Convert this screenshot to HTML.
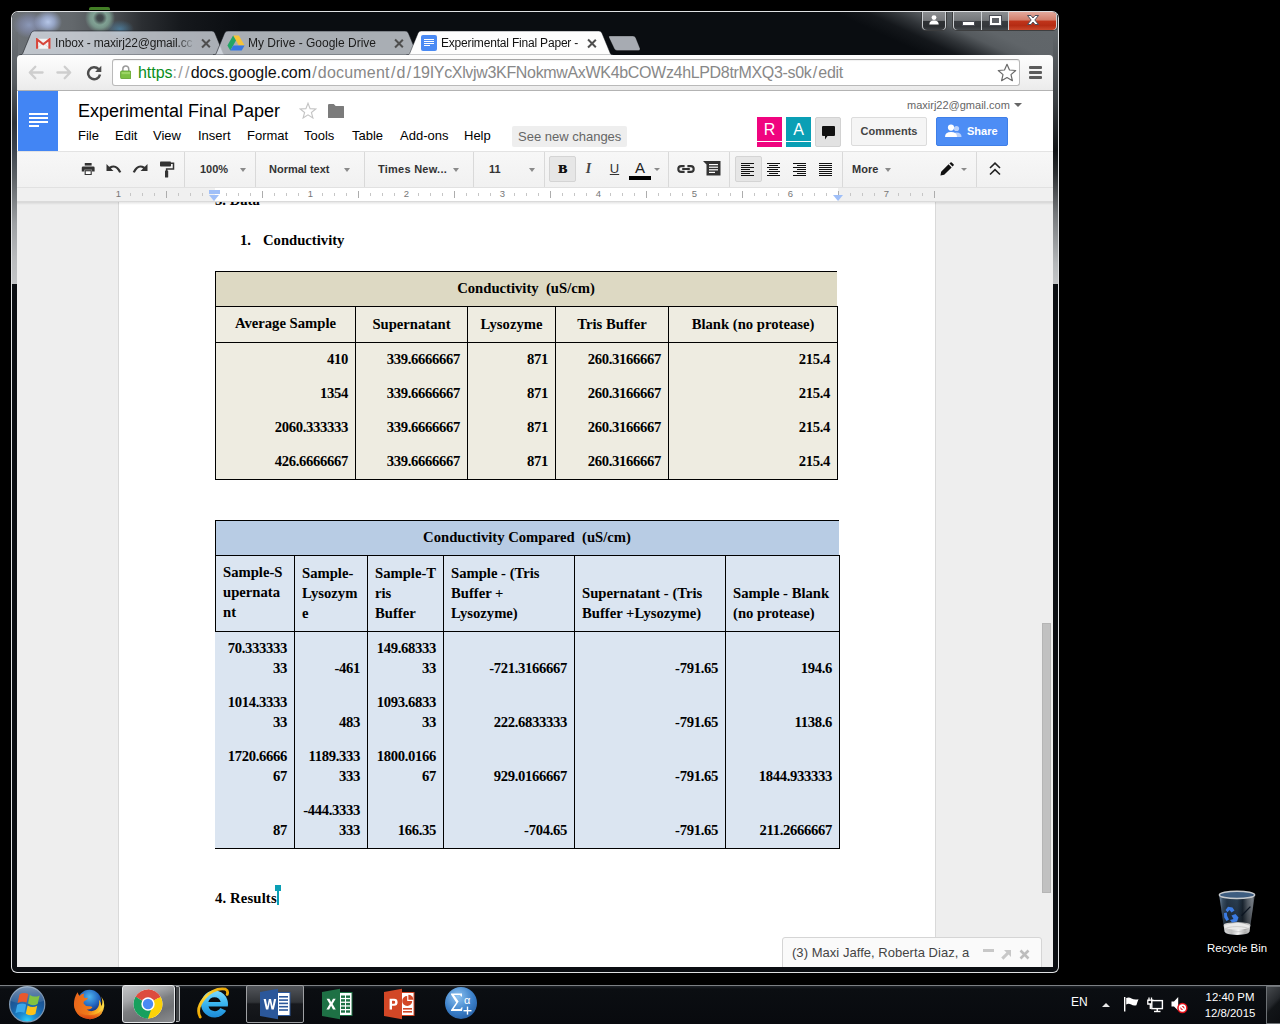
<!DOCTYPE html>
<html>
<head>
<meta charset="utf-8">
<title>Experimental Final Paper - Google Docs</title>
<style>
*{box-sizing:border-box;margin:0;padding:0}
html,body{width:1280px;height:1024px;overflow:hidden;background:#000;font-family:"Liberation Sans",sans-serif}
.abs{position:absolute}
#desk{position:absolute;left:0;top:0;width:1280px;height:1024px;background:#000;overflow:hidden}
/* ---------- window frame ---------- */
#win{position:absolute;left:11px;top:11px;width:1048px;height:962px;border-radius:7px 7px 6px 6px;background:#dfe1e3;overflow:hidden}
#winin{position:absolute;left:1px;top:1px;right:1px;bottom:1px;border-radius:6px 6px 5px 5px;overflow:hidden;background:#0a0d11}
#titlebg{position:absolute;left:0;top:0;width:1046px;height:48px;
 background:
  radial-gradient(ellipse 14px 12px at 36px 10px, rgba(190,208,245,.9) 0%, rgba(170,188,232,.7) 45%, rgba(140,155,200,0) 100%),
  radial-gradient(ellipse 16px 13px at 17px 13px, rgba(150,165,205,.75) 0%, rgba(140,150,195,.45) 55%, rgba(120,135,170,0) 100%),
  radial-gradient(circle at 88px 6px, rgba(50,58,60,.65) 0px, rgba(60,70,72,.6) 3px, rgba(140,180,162,.8) 7px, rgba(135,176,158,.7) 10px, rgba(90,110,110,0) 15px),
  radial-gradient(ellipse 14px 9px at 108px 17px, rgba(80,150,195,.6) 0%, rgba(80,150,195,0) 100%),
  linear-gradient(90deg,#6d7277 0px,#63686c 60px,#4b4f53 100px,#2b2e32 130px,#15181c 170px,#0a0d11 230px,#0a0d11 1046px);}
#refl{position:absolute;left:828px;top:0;width:218px;height:48px;background:linear-gradient(25deg,rgba(93,98,102,0) 30%,rgba(93,98,102,.12) 40%,rgba(93,98,102,.45) 48%,rgba(93,98,102,.9) 57%,rgba(96,101,105,1) 66%,rgba(98,103,107,1) 100%)}
#frameL{position:absolute;left:0;top:20px;width:6px;height:252px;background:linear-gradient(180deg,#6c7176 0%,#54595e 20%,#2f3337 36%,#3a424c 46%,#5d6266 58%,#9da0a3 76%,#b9bbbd 90%,#c3c5c7 100%)}
#frameR{position:absolute;left:1041px;top:20px;width:5px;height:252px;background:linear-gradient(180deg,#62676b 0%,#3a3e42 28%,#101316 47%,#2b2e31 56%,#74777a 72%,#b4b7b9 92%,#c3c5c7 100%)}
.tt{top:23px;font-size:12px;line-height:16px;color:#1c1c1c;white-space:nowrap;overflow:hidden;-webkit-mask-image:linear-gradient(90deg,#000 0,#000 calc(100% - 16px),rgba(0,0,0,.1) 100%);mask-image:linear-gradient(90deg,#000 0,#000 calc(100% - 16px),rgba(0,0,0,.1) 100%)}
.tx{top:27px;width:9px;height:9px}
.tx:before,.tx:after{content:"";position:absolute;left:3.7px;top:-1px;width:1.6px;height:11px;background:#4f4f4f;transform:rotate(45deg)}
.tx:after{transform:rotate(-45deg)}
/* ---------- chrome toolbar ---------- */
#tool{position:absolute;left:17px;top:55px;width:1036px;height:36px;background:linear-gradient(180deg,#fdfdfd 0%,#f3f3f3 60%,#ebebeb 100%);border-radius:4px 4px 0 0;border-bottom:1px solid #b3b3b3}
#omni{position:absolute;left:95px;top:4px;width:908px;height:27px;background:#fff;border:1px solid #b9b9b9;border-top-color:#a6a6a6;border-radius:3px;box-shadow:inset 0 1px 1px rgba(0,0,0,.06)}
#url i{font-style:normal;display:inline-block;width:6.9px;text-align:center;letter-spacing:0}
#url{position:absolute;left:25px;top:2px;font-size:16px;line-height:21px;white-space:nowrap;color:#888;letter-spacing:-0.03px}
/* ---------- page content ---------- */
#content{position:absolute;left:17px;top:91px;width:1036px;height:876px;background:#eee;overflow:hidden}
#c0{position:absolute;left:-17px;top:-91px;width:1280px;height:1024px}
#c0 div,#c0 span,#c0 svg{position:absolute}
.m{font-size:13px;line-height:16px;color:#000;top:128px;white-space:nowrap}
.sep{top:152px;width:1px;height:35px;background:#d9d9d9}
.tb{font-weight:bold;font-size:11px;line-height:14px;color:#333;top:162px;white-space:nowrap}
.dd{top:168px;width:0;height:0;border-left:3.5px solid transparent;border-right:3.5px solid transparent;border-top:4px solid #8a8a8a}
.rn{font-size:9.5px;line-height:12px;color:#777;top:188px;width:12px;text-align:center}
.t{font-family:"Liberation Serif",serif;font-weight:bold;font-size:14.67px;line-height:20px;color:#000;white-space:nowrap}
.n{letter-spacing:-0.33px}
.r{text-align:right}
.c{text-align:center}
.ln{background:#000}
/* ---------- taskbar ---------- */
#task{position:absolute;left:0;top:985px;width:1280px;height:39px;background:linear-gradient(180deg,#7c8084 0px,#7c8084 1px,#1b1f24 1.5px,#0b0e12 4px,#080a0e 39px)}
</style>
</head>
<body>
<div id="desk">
  <div class="abs" style="left:89px;top:7px;width:21px;height:3px;background:#437f26;border-radius:2px 2px 0 0"></div>

  <!-- WINDOW -->
  <div id="win"><div id="winin">
    <div id="titlebg"></div>
    <div id="refl"></div>
    <div id="frameL"></div>
    <div id="frameR"></div>
    <svg class="abs" style="left:0;top:0" width="1046" height="50" viewBox="12 12 1046 50">
<path d="M609.5,36 L633,36 Q635,36 635.8,38 L640,48.5 Q640.6,50.5 638.5,50.5 L617,50.5 Q615,50.5 614.2,48.5 L609,37.5 Q608.5,36 609.5,36 Z" fill="rgba(206,211,219,.80)" stroke="rgba(0,0,0,.35)" stroke-width="0.8"/>
<path d="M19.5,55 C22.0,55 22.7,54 23.3,52 L30.3,35 C31.3,32.5 32.0,31 34.5,31 L211.5,31 C214.0,31 214.7,32.5 215.7,35 L222.7,52 C223.3,54 224.0,55 226.5,55 Z" fill="rgba(217,222,230,.77)" stroke="rgba(20,24,30,.55)" stroke-width="1"/>
<path d="M213,55 C215.5,55 216.2,54 216.8,52 L223.8,35 C224.8,32.5 225.5,31 228,31 L405,31 C407.5,31 408.2,32.5 409.2,35 L416.2,52 C416.8,54 417.5,55 420,55 Z" fill="rgba(217,222,230,.77)" stroke="rgba(20,24,30,.55)" stroke-width="1"/>
<path d="M406.5,55 C409.0,55 409.7,54 410.3,52 L417.3,35 C418.3,32.5 419.0,31 421.5,31 L598.5,31 C601.0,31 601.7,32.5 602.7,35 L609.7,52 C610.3,54 611.0,55 613.5,55 Z" fill="#fdfdfd" stroke="rgba(20,24,30,.45)" stroke-width="1"/>
</svg>
<!-- gmail icon -->
<svg class="abs" style="left:24px;top:26px" width="14.5" height="11.5" viewBox="0 0 16 12"><rect x="1" y="0.5" width="14" height="11" fill="#f3f3f3"/><path d="M1 11 L8 5 L15 11" fill="none" stroke="#d8d8d8" stroke-width="1"/><path d="M1.2 11.5 V1.2 L8 6.6 L14.8 1.2 V11.5" fill="none" stroke="#d8453a" stroke-width="2.3" stroke-linejoin="miter"/></svg>
<div class="abs tt" style="left:43px;width:138px;letter-spacing:-0.17px">Inbox - maxirj22@gmail.cc</div>
<div class="abs tx" style="left:189px"></div>
<!-- drive icon -->
<svg class="abs" style="left:215px;top:23px" width="18" height="16" viewBox="0 0 18 16"><path d="M6.1 0.5 H11.9 L17.6 10.4 H11.8 Z" fill="#f6c338"/><path d="M6.1 0.5 L9 5.5 L3.3 15.4 L0.4 10.4 Z" fill="#23a566"/><path d="M6.2 10.4 H17.6 L14.7 15.4 H3.3 Z" fill="#3777e3"/></svg>
<div class="abs tt" style="left:236px;width:150px">My Drive - Google Drive</div>
<div class="abs tx" style="left:382px"></div>
<!-- docs icon -->
<div class="abs" style="left:409px;top:23px;width:16px;height:16px;background:#4a8af4;border-radius:2px"></div>
<div class="abs" style="left:412px;top:27px;width:10px;height:1px;background:#fff"></div>
<div class="abs" style="left:412px;top:29px;width:10px;height:1px;background:#fff"></div>
<div class="abs" style="left:412px;top:31px;width:10px;height:1px;background:#fff"></div>
<div class="abs" style="left:412px;top:33px;width:6px;height:1px;background:#fff"></div>
<div class="abs tt" style="left:429px;width:153px;color:#111;letter-spacing:-0.19px">Experimental Final Paper -</div>
<div class="abs tx" style="left:575px"></div>

    <!-- window buttons (coords relative to winin origin 12,12) -->
<div class="abs" style="left:909px;top:-2px;width:26px;height:21px;border:1px solid rgba(0,0,0,.7);border-radius:0 0 5px 5px;background:rgba(225,228,231,.85)"></div>
<div class="abs" style="left:911px;top:0;width:22px;height:18px;border-radius:0 0 4px 4px;background:linear-gradient(180deg,#8b8e91 0%,#77797c 47%,#2f3235 50%,#2b2e31 80%,#3b3e42 100%)"></div>
<svg class="abs" style="left:917px;top:3px" width="10" height="10" viewBox="0 0 10 10"><circle cx="5" cy="2.6" r="2.4" fill="#fff"/><path d="M0.3 9.6 Q0.3 5.6 5 5.6 Q9.7 5.6 9.7 9.6 Z" fill="#fff"/></svg>
<div class="abs" style="left:940px;top:-2px;width:106px;height:21px;border:1px solid rgba(0,0,0,.7);border-radius:0 0 5px 5px;background:rgba(225,228,231,.85)"></div>
<div class="abs" style="left:942px;top:0;width:27px;height:18px;border-radius:0 0 0 4px;background:linear-gradient(180deg,#8b8e91 0%,#74777a 47%,#3a3d41 50%,#34373b 80%,#45494d 100%)"></div>
<div class="abs" style="left:970px;top:0;width:26px;height:18px;background:linear-gradient(180deg,#8b8e91 0%,#74777a 47%,#3a3d41 50%,#34373b 80%,#45494d 100%)"></div>
<div class="abs" style="left:997px;top:0;width:47px;height:18px;border-radius:0 0 4px 0;background:linear-gradient(180deg,#e3a99c 0%,#d27f6c 45%,#c0341b 50%,#b52c14 75%,#c9482c 100%)"></div>
<div class="abs" style="left:951px;top:10px;width:11px;height:3px;background:#fff;border:1px solid #4a4d55;box-sizing:content-box;margin:-1px"></div>
<div class="abs" style="left:978px;top:4px;width:11px;height:9px;border:2px solid #fff;outline:1px solid #4a4d55;background:#5e6166"></div>
<svg class="abs" style="left:1014px;top:2px" width="14" height="12" viewBox="0 0 14 12"><path d="M1.5 1.5 H5 L7 4 L9 1.5 H12.5 L8.8 6 L12.5 10.5 H9 L7 8 L5 10.5 H1.5 L5.2 6 Z" fill="#fff" stroke="#4b4f5c" stroke-width="1"/></svg>

  </div></div>

  <div id="tool">
    <!-- nav buttons (coords relative to #tool origin 17,55) -->
<svg class="abs" style="left:10.7px;top:10px" width="16" height="15" viewBox="0 0 16 15"><path d="M7.3 1.8 L1.8 7.5 L7.3 13.2 M2.200 7.500 H14.6" fill="none" stroke="#cecece" stroke-width="2.3" stroke-linecap="round" stroke-linejoin="round"/></svg>
<svg class="abs" style="left:39.2px;top:10px" width="16" height="15" viewBox="0 0 16 15"><path d="M8.7 1.8 L14.2 7.5 L8.7 13.2 M13.8 7.500 H1.4" fill="none" stroke="#cecece" stroke-width="2.3" stroke-linecap="round" stroke-linejoin="round"/></svg>
<svg class="abs" style="left:68.5px;top:9.5px" width="16" height="16" viewBox="0 0 16 16"><path d="M12.6 4.2 A6 6 0 1 0 14 9.5" fill="none" stroke="#4d4d4d" stroke-width="2.5"/><path d="M15.3 0.8 V7 H9.1 Z" fill="#4d4d4d"/></svg>
<!-- hamburger -->
<div class="abs" style="left:1012px;top:11px;width:13px;height:3px;background:#5c5c5c;border-radius:1px"></div>
<div class="abs" style="left:1012px;top:16px;width:13px;height:3px;background:#5c5c5c;border-radius:1px"></div>
<div class="abs" style="left:1012px;top:21px;width:13px;height:3px;background:#5c5c5c;border-radius:1px"></div>

    <div id="omni">
      <svg class="abs" style="left:6.6px;top:5px" width="11.6" height="14.4" viewBox="0 0 13 16"><path d="M3.2 7 V4.4 A3.3 3.3 0 0 1 9.8 4.4 V7" fill="none" stroke="#9a9a9a" stroke-width="1.7"/><rect x="0.7" y="6.7" width="11.6" height="8.6" rx="1.2" fill="#7cc043" stroke="#5e9e2e" stroke-width="1"/><rect x="1.7" y="7.6" width="9.6" height="2.6" fill="#a2d86e" opacity=".8"/></svg>
<svg class="abs" style="left:884px;top:3px" width="20" height="19" viewBox="0 0 20 19"><path d="M10 1.3 L12.5 7 L18.7 7.5 L14 11.6 L15.4 17.7 L10 14.5 L4.6 17.7 L6 11.6 L1.3 7.5 L7.5 7 Z" fill="#fff" stroke="#6a6a6a" stroke-width="1.2" stroke-linejoin="round"/></svg>

      <div id="url"><span style="color:#0b8e1c">https</span><span style="color:#999">:<i>/</i><i>/</i></span><span style="color:#111;letter-spacing:-0.05px">docs.google.com</span><span style="letter-spacing:.19px"><i>/</i>document<i>/</i>d<i>/</i></span><span style="letter-spacing:-0.33px">19IYcXlvjw3KFNokmwAxWK4bCOWz4hLPD8trMXQ3-s0k<i>/</i>edit</span></div>
    </div>
  </div>

  <div id="content">
    <div id="c0">
<!-- docs header -->
<div style="left:17px;top:91px;width:1036px;height:60px;background:#fff"></div>
<div style="left:17px;top:151px;width:1036px;height:1px;background:#e3e3e3"></div>
<div style="left:18px;top:91px;width:40px;height:60px;background:#4285f4"></div>
<div style="left:29px;top:113px;width:19px;height:2px;background:#fff"></div>
<div style="left:29px;top:117px;width:19px;height:2px;background:#fff"></div>
<div style="left:29px;top:121px;width:19px;height:2px;background:#fff"></div>
<div style="left:29px;top:125px;width:10px;height:2px;background:#fff"></div>
<div style="left:78px;top:100px;font-size:18px;line-height:22px;color:#000;white-space:nowrap">Experimental Final Paper</div>
<svg style="left:299px;top:102px" width="18" height="17" viewBox="0 0 18 17"><path d="M9 1.2 L11.1 6.6 L16.8 6.9 L12.4 10.5 L13.9 16 L9 12.9 L4.1 16 L5.6 10.5 L1.2 6.9 L6.9 6.6 Z" fill="none" stroke="#c4c4c4" stroke-width="1.1"/></svg>
<svg style="left:328px;top:103.5px" width="16.3" height="14.4" viewBox="0 0 17 15"><path d="M0 1.2 Q0 0 1.2 0 L6 0 L8 2 L15.8 2 Q17 2 17 3.2 L17 13.8 Q17 15 15.8 15 L1.2 15 Q0 15 0 13.8 Z" fill="#7b7b7b"/></svg>
<div class="m" style="left:78px">File</div>
<div class="m" style="left:115px">Edit</div>
<div class="m" style="left:153px">View</div>
<div class="m" style="left:198px">Insert</div>
<div class="m" style="left:247px">Format</div>
<div class="m" style="left:304px">Tools</div>
<div class="m" style="left:352px">Table</div>
<div class="m" style="left:400px">Add-ons</div>
<div class="m" style="left:464px">Help</div>
<div style="left:512px;top:126px;width:115px;height:21px;background:#eee;border-radius:2px"></div>
<div class="m" style="left:518px;top:129px;color:#666">See new changes</div>
<!-- right side of header -->
<div style="left:907px;top:98px;font-size:11px;line-height:14px;color:#666;white-space:nowrap">maxirj22@gmail.com</div>
<div style="left:1014px;top:103px;width:0;height:0;border-left:4px solid transparent;border-right:4px solid transparent;border-top:4px solid #666"></div>
<div style="left:757px;top:117px;width:25px;height:30px;background:#f0047f"></div>
<div style="left:757px;top:141px;width:25px;height:1px;background:#fff"></div>
<div style="left:757px;top:121px;width:25px;font-size:16px;line-height:18px;color:#fff;text-align:center">R</div>
<div style="left:786px;top:117px;width:25px;height:30px;background:#0a9fb5"></div>
<div style="left:786px;top:141px;width:25px;height:1px;background:#fff"></div>
<div style="left:786px;top:121px;width:25px;font-size:16px;line-height:18px;color:#fff;text-align:center">A</div>
<div style="left:815px;top:117px;width:26px;height:30px;background:#e2e2e2;border:1px solid #d2d2d2;border-radius:2px"></div>
<svg style="left:822px;top:126px" width="13" height="14" viewBox="0 0 13 14"><path d="M1 0 H12 Q13 0 13 1 V9 Q13 10 12 10 H5.5 L3 13.5 V10 H1 Q0 10 0 9 V1 Q0 0 1 0 Z" fill="#111"/></svg>
<div style="left:851px;top:117px;width:76px;height:29px;background:#f5f5f5;border:1px solid #dcdcdc;border-radius:2px"></div>
<div style="left:851px;top:124px;width:76px;text-align:center;font-weight:bold;font-size:11px;line-height:14px;color:#444">Comments</div>
<div style="left:936px;top:117px;width:72px;height:29px;background:#4d8df5;border:1px solid #3f7fe8;border-radius:2px"></div>
<svg style="left:945px;top:124px" width="17" height="14" viewBox="0 0 17 14"><circle cx="11.5" cy="4.5" r="2.6" fill="#b9d1fb"/><path d="M7.5 13 Q7.5 8.5 11.5 8.5 Q16.5 8.5 16.5 13 Z" fill="#b9d1fb"/><circle cx="6" cy="3.6" r="3.1" fill="#fff"/><path d="M0 13 Q0 8 6 8 Q12 8 12 13 Z" fill="#fff"/></svg>
<div style="left:967px;top:124px;font-weight:bold;font-size:11px;line-height:14px;color:#fff">Share</div>

<!--PAGE-->
<!-- page -->
<div style="left:118px;top:180px;width:818px;height:800px;background:#fff;border:1px solid #d9d9d9"></div>
<div class="t" style="left:215px;top:190px;">3. Data</div>
<div class="t" style="left:240px;top:230px;">1.</div>
<div class="t" style="left:263px;top:230px;">Conductivity</div>
<div style="left:215px;top:271px;width:622px;height:35px;background:#ddd9c3"></div>
<div style="left:215px;top:306px;width:623px;height:173px;background:#eeece1"></div>
<div class="ln" style="left:215px;top:271px;width:622px;height:1px"></div>
<div class="ln" style="left:215px;top:306px;width:623px;height:1px"></div>
<div class="ln" style="left:215px;top:342px;width:623px;height:1px"></div>
<div class="ln" style="left:215px;top:479px;width:623px;height:1px"></div>
<div class="ln" style="left:215px;top:271px;width:1px;height:209px"></div>
<div class="ln" style="left:355px;top:306px;width:1px;height:174px"></div>
<div class="ln" style="left:467px;top:306px;width:1px;height:174px"></div>
<div class="ln" style="left:555px;top:306px;width:1px;height:174px"></div>
<div class="ln" style="left:668px;top:306px;width:1px;height:174px"></div>
<div class="ln" style="left:837px;top:306px;width:1px;height:174px"></div>
<div class="t c" style="left:215px;top:278px;width:622px;">Conductivity&nbsp; (uS/cm)</div>
<div class="t c" style="left:215px;top:313px;width:141px;">Average Sample</div>
<div class="t c" style="left:355px;top:314px;width:113px;">Supernatant</div>
<div class="t c" style="left:467px;top:314px;width:89px;">Lysozyme</div>
<div class="t c" style="left:555px;top:314px;width:114px;">Tris Buffer</div>
<div class="t c" style="left:668px;top:314px;width:170px;">Blank (no protease)</div>
<div class="t r n" style="left:215px;top:349px;width:133px;">410</div>
<div class="t r n" style="left:215px;top:383px;width:133px;">1354</div>
<div class="t r n" style="left:215px;top:417px;width:133px;">2060.333333</div>
<div class="t r n" style="left:215px;top:451px;width:133px;">426.6666667</div>
<div class="t r n" style="left:355px;top:349px;width:105px;">339.6666667</div>
<div class="t r n" style="left:355px;top:383px;width:105px;">339.6666667</div>
<div class="t r n" style="left:355px;top:417px;width:105px;">339.6666667</div>
<div class="t r n" style="left:355px;top:451px;width:105px;">339.6666667</div>
<div class="t r n" style="left:467px;top:349px;width:81px;">871</div>
<div class="t r n" style="left:467px;top:383px;width:81px;">871</div>
<div class="t r n" style="left:467px;top:417px;width:81px;">871</div>
<div class="t r n" style="left:467px;top:451px;width:81px;">871</div>
<div class="t r n" style="left:555px;top:349px;width:106px;">260.3166667</div>
<div class="t r n" style="left:555px;top:383px;width:106px;">260.3166667</div>
<div class="t r n" style="left:555px;top:417px;width:106px;">260.3166667</div>
<div class="t r n" style="left:555px;top:451px;width:106px;">260.3166667</div>
<div class="t r n" style="left:668px;top:349px;width:162px;">215.4</div>
<div class="t r n" style="left:668px;top:383px;width:162px;">215.4</div>
<div class="t r n" style="left:668px;top:417px;width:162px;">215.4</div>
<div class="t r n" style="left:668px;top:451px;width:162px;">215.4</div>
<div style="left:215px;top:520px;width:624px;height:35px;background:#b8cce4"></div>
<div style="left:215px;top:555px;width:625px;height:293px;background:#dbe5f1"></div>
<div class="ln" style="left:215px;top:520px;width:624px;height:1px"></div>
<div class="ln" style="left:215px;top:555px;width:625px;height:1px"></div>
<div class="ln" style="left:215px;top:631px;width:625px;height:1px"></div>
<div class="ln" style="left:215px;top:848px;width:625px;height:1px"></div>
<div class="ln" style="left:215px;top:520px;width:1px;height:112px"></div>
<div class="ln" style="left:294px;top:555px;width:1px;height:294px"></div>
<div class="ln" style="left:367px;top:555px;width:1px;height:294px"></div>
<div class="ln" style="left:443px;top:555px;width:1px;height:294px"></div>
<div class="ln" style="left:574px;top:555px;width:1px;height:294px"></div>
<div class="ln" style="left:725px;top:555px;width:1px;height:294px"></div>
<div class="ln" style="left:839px;top:555px;width:1px;height:294px"></div>
<div class="t c" style="left:215px;top:527px;width:624px;">Conductivity Compared&nbsp; (uS/cm)</div>
<div class="t" style="left:223px;top:562px;">Sample-S</div>
<div class="t" style="left:223px;top:582px;">upernata</div>
<div class="t" style="left:223px;top:602px;">nt</div>
<div class="t" style="left:302px;top:563px;">Sample-</div>
<div class="t" style="left:302px;top:583px;">Lysozym</div>
<div class="t" style="left:302px;top:603px;">e</div>
<div class="t" style="left:375px;top:563px;">Sample-T</div>
<div class="t" style="left:375px;top:583px;">ris</div>
<div class="t" style="left:375px;top:603px;">Buffer</div>
<div class="t" style="left:451px;top:563px;">Sample - (Tris</div>
<div class="t" style="left:451px;top:583px;">Buffer +</div>
<div class="t" style="left:451px;top:603px;">Lysozyme)</div>
<div class="t" style="left:582px;top:583px;">Supernatant - (Tris</div>
<div class="t" style="left:582px;top:603px;">Buffer +Lysozyme)</div>
<div class="t" style="left:733px;top:583px;">Sample - Blank</div>
<div class="t" style="left:733px;top:603px;">(no protease)</div>
<div class="t r n" style="left:215px;top:638px;width:72px;">70.333333</div>
<div class="t r n" style="left:215px;top:658px;width:72px;">33</div>
<div class="t r n" style="left:215px;top:692px;width:72px;">1014.3333</div>
<div class="t r n" style="left:215px;top:712px;width:72px;">33</div>
<div class="t r n" style="left:215px;top:746px;width:72px;">1720.6666</div>
<div class="t r n" style="left:215px;top:766px;width:72px;">67</div>
<div class="t r n" style="left:215px;top:820px;width:72px;">87</div>
<div class="t r n" style="left:294px;top:658px;width:66px;">-461</div>
<div class="t r n" style="left:294px;top:712px;width:66px;">483</div>
<div class="t r n" style="left:294px;top:746px;width:66px;">1189.333</div>
<div class="t r n" style="left:294px;top:766px;width:66px;">333</div>
<div class="t r n" style="left:294px;top:800px;width:66px;">-444.3333</div>
<div class="t r n" style="left:294px;top:820px;width:66px;">333</div>
<div class="t r n" style="left:367px;top:638px;width:69px;">149.68333</div>
<div class="t r n" style="left:367px;top:658px;width:69px;">33</div>
<div class="t r n" style="left:367px;top:692px;width:69px;">1093.6833</div>
<div class="t r n" style="left:367px;top:712px;width:69px;">33</div>
<div class="t r n" style="left:367px;top:746px;width:69px;">1800.0166</div>
<div class="t r n" style="left:367px;top:766px;width:69px;">67</div>
<div class="t r n" style="left:367px;top:820px;width:69px;">166.35</div>
<div class="t r n" style="left:443px;top:658px;width:124px;">-721.3166667</div>
<div class="t r n" style="left:443px;top:712px;width:124px;">222.6833333</div>
<div class="t r n" style="left:443px;top:766px;width:124px;">929.0166667</div>
<div class="t r n" style="left:443px;top:820px;width:124px;">-704.65</div>
<div class="t r n" style="left:574px;top:658px;width:144px;">-791.65</div>
<div class="t r n" style="left:574px;top:712px;width:144px;">-791.65</div>
<div class="t r n" style="left:574px;top:766px;width:144px;">-791.65</div>
<div class="t r n" style="left:574px;top:820px;width:144px;">-791.65</div>
<div class="t r n" style="left:725px;top:658px;width:107px;">194.6</div>
<div class="t r n" style="left:725px;top:712px;width:107px;">1138.6</div>
<div class="t r n" style="left:725px;top:766px;width:107px;">1844.933333</div>
<div class="t r n" style="left:725px;top:820px;width:107px;">211.2666667</div>
<div class="t" style="left:215px;top:888px;letter-spacing:.15px;">4. Results</div>
<div style="left:277px;top:889px;width:2px;height:16px;background:#0a9fb5"></div>
<div style="left:275px;top:885px;width:6px;height:6px;background:#0a9fb5"></div>
<!--/PAGE-->
<!-- docs toolbar -->
<div style="left:17px;top:152px;width:1036px;height:35px;background:linear-gradient(180deg,#f7f7f7,#f1f1f1)"></div>
<div style="left:17px;top:187px;width:1036px;height:1px;background:#e1e1e1"></div>
<div class="sep" style="left:184px"></div><div class="sep" style="left:255px"></div><div class="sep" style="left:364px"></div><div class="sep" style="left:473px"></div><div class="sep" style="left:544px"></div><div class="sep" style="left:668px"></div><div class="sep" style="left:729px"></div><div class="sep" style="left:842px"></div><div class="sep" style="left:976px"></div>
<!-- print -->
<svg style="left:80.6px;top:163px" width="14.4" height="12" viewBox="0 0 15 14"><rect x="3.5" y="0" width="8" height="3" fill="#333"/><path d="M1.5 4 H13.5 Q15 4 15 5.5 V10 H12 V8 H3 V10 H0 V5.5 Q0 4 1.5 4 Z" fill="#333"/><rect x="4" y="9" width="7" height="4.5" fill="#fff" stroke="#333" stroke-width="1.3"/></svg>
<!-- undo -->
<svg style="left:106px;top:163px" width="16" height="12" viewBox="0 0 16 12"><path d="M0.5 1 L0.5 8 L7.5 8 L4.9 5.4 Q9.5 2.6 13.2 9.8 L15.3 9 Q11 -0.5 3.2 3.7 Z" fill="#333"/></svg>
<!-- redo -->
<svg style="left:132px;top:163px" width="16" height="12" viewBox="0 0 16 12"><path d="M15.5 1 L15.5 8 L8.5 8 L11.1 5.4 Q6.5 2.6 2.8 9.8 L0.7 9 Q5 -0.5 12.8 3.7 Z" fill="#333"/></svg>
<!-- paint format -->
<svg style="left:159px;top:161px" width="16" height="17" viewBox="0 0 16 17"><rect x="1" y="0.5" width="11" height="5" rx="0.8" fill="#333"/><path d="M12 2.2 H14.5 V8 H7.6 V10" fill="none" stroke="#333" stroke-width="1.5"/><rect x="6" y="9.5" width="3.2" height="7" rx="0.6" fill="#333"/></svg>
<div class="tb" style="left:200px">100%</div><div class="dd" style="left:240px"></div>
<div class="tb" style="left:269px">Normal text</div><div class="dd" style="left:344px"></div>
<div class="tb" style="left:378px;letter-spacing:.25px">Times New...</div><div class="dd" style="left:453px"></div>
<div class="tb" style="left:489px">11</div><div class="dd" style="left:529px"></div>
<!-- B I U A -->
<div style="left:549px;top:156px;width:27px;height:26px;background:#e6e6e6;border:1px solid #d4d4d4;border-radius:2px"></div>
<div style="left:549px;top:161px;width:27px;text-align:center;font-family:'Liberation Serif',serif;font-weight:bold;font-size:13.5px;line-height:16px;color:#111;text-shadow:.4px 0 0 #111">B</div>
<div style="left:575px;top:161px;width:27px;text-align:center;font-family:'Liberation Serif',serif;font-style:italic;font-weight:bold;font-size:14px;line-height:16px;color:#444">I</div>
<div style="left:601px;top:161px;width:27px;text-align:center;font-size:13px;line-height:16px;color:#333;text-decoration:underline">U</div>
<div style="left:628px;top:159px;width:24px;text-align:center;font-size:15px;line-height:17px;color:#222">A</div>
<div style="left:629px;top:176.4px;width:22px;height:3.4px;background:#000"></div>
<div class="dd" style="left:654px;border-left-width:3px;border-right-width:3px;border-top-width:3.5px"></div>
<!-- link -->
<svg style="left:677px;top:164.5px" width="18" height="8" viewBox="0 0 18 8"><path d="M7.6 1.1 H4.2 A2.9 2.9 0 0 0 4.2 6.900 H7.6 M10.4 1.1 H13.8 A2.9 2.9 0 0 1 13.8 6.900 H10.4" fill="none" stroke="#333" stroke-width="2.1"/><rect x="5.2" y="3" width="7.6" height="2" fill="#333"/></svg>
<!-- comment -->
<svg style="left:703px;top:161px" width="18" height="15" viewBox="0 0 18 15"><path d="M0 0 H17.5 V14.5 H3.5 V3.5 Z" fill="#333"/><rect x="6" y="3" width="9" height="1.2" fill="#fff"/><rect x="6" y="5.6" width="9" height="1.2" fill="#fff"/><rect x="6" y="8.2" width="9" height="1.2" fill="#fff"/><rect x="6" y="10.8" width="6" height="1.2" fill="#fff"/></svg>
<!-- align -->
<div style="left:735px;top:156px;width:27px;height:26px;background:#e6e6e6;border:1px solid #d4d4d4;border-radius:2px"></div>
<div style="left:741px;top:163px;width:13px;height:1px;background:#111"></div>
<div style="left:741px;top:165px;width:9px;height:1px;background:#111"></div>
<div style="left:741px;top:167px;width:13px;height:1px;background:#111"></div>
<div style="left:741px;top:169px;width:9px;height:1px;background:#111"></div>
<div style="left:741px;top:171px;width:13px;height:1px;background:#111"></div>
<div style="left:741px;top:173px;width:9px;height:1px;background:#111"></div>
<div style="left:741px;top:175px;width:13px;height:1px;background:#111"></div><div style="left:767.0px;top:163px;width:13px;height:1px;background:#111"></div>
<div style="left:769.0px;top:165px;width:9px;height:1px;background:#111"></div>
<div style="left:767.0px;top:167px;width:13px;height:1px;background:#111"></div>
<div style="left:769.0px;top:169px;width:9px;height:1px;background:#111"></div>
<div style="left:767.0px;top:171px;width:13px;height:1px;background:#111"></div>
<div style="left:769.0px;top:173px;width:9px;height:1px;background:#111"></div>
<div style="left:767.0px;top:175px;width:13px;height:1px;background:#111"></div><div style="left:793px;top:163px;width:13px;height:1px;background:#111"></div>
<div style="left:797px;top:165px;width:9px;height:1px;background:#111"></div>
<div style="left:793px;top:167px;width:13px;height:1px;background:#111"></div>
<div style="left:797px;top:169px;width:9px;height:1px;background:#111"></div>
<div style="left:793px;top:171px;width:13px;height:1px;background:#111"></div>
<div style="left:797px;top:173px;width:9px;height:1px;background:#111"></div>
<div style="left:793px;top:175px;width:13px;height:1px;background:#111"></div><div style="left:819px;top:163px;width:13px;height:1px;background:#111"></div>
<div style="left:819px;top:165px;width:13px;height:1px;background:#111"></div>
<div style="left:819px;top:167px;width:13px;height:1px;background:#111"></div>
<div style="left:819px;top:169px;width:13px;height:1px;background:#111"></div>
<div style="left:819px;top:171px;width:13px;height:1px;background:#111"></div>
<div style="left:819px;top:173px;width:13px;height:1px;background:#111"></div>
<div style="left:819px;top:175px;width:13px;height:1px;background:#111"></div>
<div class="tb" style="left:852px">More</div><div class="dd" style="left:885px"></div>
<!-- pencil -->
<svg style="left:940px;top:162px" width="14" height="14" viewBox="0 0 16 16"><path d="M0.5 15.5 L1.3 11.2 L9.8 2.7 L13.3 6.2 L4.8 14.7 Z M10.8 1.7 L12 0.5 Q12.7 -0.1 13.4 0.5 L15.5 2.6 Q16.1 3.3 15.5 4 L14.3 5.2 Z" fill="#111"/></svg>
<div class="dd" style="left:961px;border-left-width:3px;border-right-width:3px;border-top-width:3.5px"></div>
<!-- chevrons -->
<svg style="left:989px;top:162px" width="12" height="14" viewBox="0 0 12 14"><path d="M1 6 L6 1.2 L11 6 M1 12.5 L6 7.7 L11 12.5" fill="none" stroke="#222" stroke-width="1.6"/></svg>

<!-- ruler -->
<div style="left:17px;top:188px;width:1036px;height:13px;background:#f0f0f0"></div>
<div style="left:215px;top:188px;width:623px;height:13px;background:#fff"></div>
<div style="left:17px;top:201px;width:1036px;height:1px;background:#dadada"></div>
<div style="left:17px;top:202px;width:1036px;height:3px;background:linear-gradient(180deg,rgba(0,0,0,.10),rgba(0,0,0,0))"></div>
<div class="rn" style="left:112.5px">1</div>
<div style="left:130px;top:193px;width:1px;height:3px;background:#c6c6c6"></div>
<div style="left:142px;top:193px;width:1px;height:3px;background:#c6c6c6"></div>
<div style="left:154px;top:193px;width:1px;height:3px;background:#c6c6c6"></div>
<div style="left:166px;top:191px;width:1px;height:7px;background:#adadad"></div>
<div style="left:178px;top:193px;width:1px;height:3px;background:#c6c6c6"></div>
<div style="left:190px;top:193px;width:1px;height:3px;background:#c6c6c6"></div>
<div style="left:202px;top:193px;width:1px;height:3px;background:#c6c6c6"></div>
<div style="left:226px;top:193px;width:1px;height:3px;background:#c6c6c6"></div>
<div style="left:238px;top:193px;width:1px;height:3px;background:#c6c6c6"></div>
<div style="left:250px;top:193px;width:1px;height:3px;background:#c6c6c6"></div>
<div style="left:262px;top:191px;width:1px;height:7px;background:#adadad"></div>
<div style="left:274px;top:193px;width:1px;height:3px;background:#c6c6c6"></div>
<div style="left:286px;top:193px;width:1px;height:3px;background:#c6c6c6"></div>
<div style="left:298px;top:193px;width:1px;height:3px;background:#c6c6c6"></div>
<div class="rn" style="left:304.5px">1</div>
<div style="left:322px;top:193px;width:1px;height:3px;background:#c6c6c6"></div>
<div style="left:334px;top:193px;width:1px;height:3px;background:#c6c6c6"></div>
<div style="left:346px;top:193px;width:1px;height:3px;background:#c6c6c6"></div>
<div style="left:358px;top:191px;width:1px;height:7px;background:#adadad"></div>
<div style="left:370px;top:193px;width:1px;height:3px;background:#c6c6c6"></div>
<div style="left:382px;top:193px;width:1px;height:3px;background:#c6c6c6"></div>
<div style="left:394px;top:193px;width:1px;height:3px;background:#c6c6c6"></div>
<div class="rn" style="left:400.5px">2</div>
<div style="left:418px;top:193px;width:1px;height:3px;background:#c6c6c6"></div>
<div style="left:430px;top:193px;width:1px;height:3px;background:#c6c6c6"></div>
<div style="left:442px;top:193px;width:1px;height:3px;background:#c6c6c6"></div>
<div style="left:454px;top:191px;width:1px;height:7px;background:#adadad"></div>
<div style="left:466px;top:193px;width:1px;height:3px;background:#c6c6c6"></div>
<div style="left:478px;top:193px;width:1px;height:3px;background:#c6c6c6"></div>
<div style="left:490px;top:193px;width:1px;height:3px;background:#c6c6c6"></div>
<div class="rn" style="left:496.5px">3</div>
<div style="left:514px;top:193px;width:1px;height:3px;background:#c6c6c6"></div>
<div style="left:526px;top:193px;width:1px;height:3px;background:#c6c6c6"></div>
<div style="left:538px;top:193px;width:1px;height:3px;background:#c6c6c6"></div>
<div style="left:550px;top:191px;width:1px;height:7px;background:#adadad"></div>
<div style="left:562px;top:193px;width:1px;height:3px;background:#c6c6c6"></div>
<div style="left:574px;top:193px;width:1px;height:3px;background:#c6c6c6"></div>
<div style="left:586px;top:193px;width:1px;height:3px;background:#c6c6c6"></div>
<div class="rn" style="left:592.5px">4</div>
<div style="left:610px;top:193px;width:1px;height:3px;background:#c6c6c6"></div>
<div style="left:622px;top:193px;width:1px;height:3px;background:#c6c6c6"></div>
<div style="left:634px;top:193px;width:1px;height:3px;background:#c6c6c6"></div>
<div style="left:646px;top:191px;width:1px;height:7px;background:#adadad"></div>
<div style="left:658px;top:193px;width:1px;height:3px;background:#c6c6c6"></div>
<div style="left:670px;top:193px;width:1px;height:3px;background:#c6c6c6"></div>
<div style="left:682px;top:193px;width:1px;height:3px;background:#c6c6c6"></div>
<div class="rn" style="left:688.5px">5</div>
<div style="left:706px;top:193px;width:1px;height:3px;background:#c6c6c6"></div>
<div style="left:718px;top:193px;width:1px;height:3px;background:#c6c6c6"></div>
<div style="left:730px;top:193px;width:1px;height:3px;background:#c6c6c6"></div>
<div style="left:742px;top:191px;width:1px;height:7px;background:#adadad"></div>
<div style="left:754px;top:193px;width:1px;height:3px;background:#c6c6c6"></div>
<div style="left:766px;top:193px;width:1px;height:3px;background:#c6c6c6"></div>
<div style="left:778px;top:193px;width:1px;height:3px;background:#c6c6c6"></div>
<div class="rn" style="left:784.5px">6</div>
<div style="left:802px;top:193px;width:1px;height:3px;background:#c6c6c6"></div>
<div style="left:814px;top:193px;width:1px;height:3px;background:#c6c6c6"></div>
<div style="left:826px;top:193px;width:1px;height:3px;background:#c6c6c6"></div>
<div style="left:838px;top:191px;width:1px;height:7px;background:#adadad"></div>
<div style="left:850px;top:193px;width:1px;height:3px;background:#c6c6c6"></div>
<div style="left:862px;top:193px;width:1px;height:3px;background:#c6c6c6"></div>
<div style="left:874px;top:193px;width:1px;height:3px;background:#c6c6c6"></div>
<div class="rn" style="left:880.5px">7</div>
<div style="left:898px;top:193px;width:1px;height:3px;background:#c6c6c6"></div>
<div style="left:910px;top:193px;width:1px;height:3px;background:#c6c6c6"></div>
<div style="left:922px;top:193px;width:1px;height:3px;background:#c6c6c6"></div>
<div style="left:934px;top:191px;width:1px;height:7px;background:#adadad"></div>
<div style="left:209px;top:190px;width:11px;height:4px;background:#9fbff8"></div>
<div style="left:209px;top:194.5px;width:0;height:0;border-left:5.5px solid transparent;border-right:5.5px solid transparent;border-top:6px solid #9fbff8"></div>
<div style="left:832.5px;top:194.5px;width:0;height:0;border-left:5.5px solid transparent;border-right:5.5px solid transparent;border-top:6px solid #9fbff8"></div>
<!-- scrollbar + chat -->
<div style="left:1042px;top:623px;width:9px;height:270px;background:#c1c1c1;border:1px solid #b5b5b5"></div>
<div style="left:782px;top:937px;width:260px;height:40px;background:#fafafa;border:1px solid #d5d5d5;border-radius:3px 3px 0 0"></div>
<div style="left:792px;top:945px;font-size:13px;line-height:16px;color:#444;white-space:nowrap;letter-spacing:.04px">(3) Maxi Jaffe, Roberta Diaz, a</div>
<div style="left:983px;top:949px;width:11px;height:3px;background:#c8c8c8"></div>
<svg style="left:1001px;top:949px" width="11" height="11" viewBox="0 0 11 11"><path d="M3 1 H10 V8 L7.6 5.6 L2.4 10.8 L0.2 8.6 L5.4 3.4 Z" fill="#c8c8c8"/></svg>
<svg style="left:1019px;top:949px" width="11" height="11" viewBox="0 0 11 11"><path d="M1.5 1.5 L9.5 9.5 M9.5 1.5 L1.5 9.5" stroke="#bdbdbd" stroke-width="2.6" fill="none"/></svg>

</div>
  </div>

  <!-- recycle bin -->
<svg class="abs" style="left:1217px;top:889px" width="40" height="48" viewBox="0 0 40 48">
<defs><linearGradient id="rb1" x1="0" x2="1" y1="0" y2="0"><stop offset="0" stop-color="#7b91a8"/><stop offset=".1" stop-color="#3c5268"/><stop offset=".22" stop-color="#26384a"/><stop offset=".5" stop-color="#2c4054"/><stop offset=".66" stop-color="#1b2733"/><stop offset=".8" stop-color="#59626c"/><stop offset=".93" stop-color="#7d848c"/><stop offset="1" stop-color="#484f57"/></linearGradient>
<linearGradient id="rbv" x1="0" x2="0" y1="0" y2="1"><stop offset="0" stop-color="#000" stop-opacity="0"/><stop offset="1" stop-color="#000" stop-opacity=".45"/></linearGradient>
<linearGradient id="rb2" x1="0" x2="1" y1="0" y2="0"><stop offset="0" stop-color="#d9d9d9"/><stop offset=".3" stop-color="#bdbdbd"/><stop offset=".55" stop-color="#f4f4f4"/><stop offset=".8" stop-color="#a9a9a9"/><stop offset="1" stop-color="#d0d0d0"/></linearGradient></defs>
<path d="M2.2 6.2 L7.6 42.6 Q8.4 45.9 20 45.9 Q31.6 45.9 32.4 42.6 L37.8 6.2 Z" fill="url(#rb1)"/>
<path d="M2.2 6.2 L7.6 42.6 Q8.4 45.9 20 45.9 Q31.6 45.9 32.4 42.6 L37.8 6.2 Z" fill="url(#rbv)"/>
<path d="M6.6 36 L7.6 42.6 Q8.4 45.9 20 45.9 Q31.6 45.9 32.4 42.6 L33.4 36 Q33 33.2 20 33.2 Q7 33.2 6.600 36 Z" fill="url(#rb2)"/>
<ellipse cx="20" cy="37.4" rx="12.6" ry="3.2" fill="#e9e9e9"/>
<ellipse cx="20" cy="40.2" rx="11.6" ry="2.6" fill="none" stroke="#c4c4c4" stroke-width=".8"/>
<path d="M24.5 26.8 L33.4 17.6" stroke="#0b1420" stroke-width="1.3"/>
<g fill="#3b7be2"><path d="M8.5 21 L11 17.8 L15.5 18.5 L17.5 21.5 L14.5 23.6 L12.5 21 L10.5 23.2 Z"/><path d="M7 24 L9.8 23.5 L10.2 27 L12 30.5 L9.5 32 L7.200 28.500 Z"/><path d="M14.5 26.500 L18.5 25 L21.5 28.500 L20 32.500 L15 33.500 L13 31 L16.500 30 Z"/></g>
<ellipse cx="20" cy="5.9" rx="17.6" ry="3.6" fill="#3e5d80" stroke="#c7cacd" stroke-width="1.5"/>
</svg>
<div class="abs" style="left:1197px;top:941px;width:80px;text-align:center;font-size:11.4px;line-height:15px;color:#fff;text-shadow:0 1px 2px #000">Recycle Bin</div>
  <div id="task">
    <!-- taskbar items: coords relative to taskbar (0,985) -->
<!-- start orb -->
<svg class="abs" style="left:7px;top:-1px" width="40" height="40" viewBox="0 0 40 40">
<defs><radialGradient id="orb" cx=".5" cy=".98" r=".85"><stop offset="0" stop-color="#2ad4ff"/><stop offset=".28" stop-color="#1b8cd2"/><stop offset=".65" stop-color="#1b5ea2"/><stop offset="1" stop-color="#1c4a82"/></radialGradient>
<linearGradient id="orbh" x1="0" x2="0" y1="0" y2="1"><stop offset="0" stop-color="#fff" stop-opacity=".75"/><stop offset="1" stop-color="#fff" stop-opacity=".1"/></linearGradient></defs>
<circle cx="20.2" cy="20.3" r="17.6" fill="url(#orb)" stroke="#7f98b2" stroke-width="1.2"/>
<path d="M3.2 17 A17 17 0 0 1 36.8 17 Q20 23 3.2 17 Z" fill="url(#orbh)" opacity=".55"/>
<path d="M12.4 10.4 Q16.5 7.8 21.3 10 L19.6 18.6 Q15.4 16.6 10.6 19 Z" fill="#e8582c"/>
<path d="M22.8 11 Q27.5 14 32.6 11.4 L30.6 20 Q25.8 22.8 21 19.6 Z" fill="#83c341"/>
<path d="M10.2 20.8 Q14.8 18.4 19.2 20.4 L17.4 28.8 Q13 26.8 8.4 29.2 Z" fill="#3aa8ea"/>
<path d="M20.6 21.4 Q25.4 24.4 30.2 21.8 L28.4 30 Q23.6 32.8 18.8 29.8 Z" fill="#fbc21a"/>
</svg>
<!-- firefox -->
<svg class="abs" style="left:73px;top:3px" width="32" height="32" viewBox="0 0 32 32">
<defs><radialGradient id="ffg" cx=".5" cy=".3" r=".7"><stop offset="0" stop-color="#4fb4ee"/><stop offset=".55" stop-color="#2467c0"/><stop offset="1" stop-color="#14256f"/></radialGradient>
<linearGradient id="fff" x1="0" x2="1" y1=".2" y2=".4"><stop offset="0" stop-color="#e8641a"/><stop offset=".55" stop-color="#f07a1a"/><stop offset=".85" stop-color="#fbb824"/><stop offset="1" stop-color="#fde04a"/></linearGradient>
<linearGradient id="ffb" x1="0" x2="0" y1="0" y2="1"><stop offset="0" stop-color="#f58a1c" stop-opacity="0"/><stop offset="1" stop-color="#d83c10"/></linearGradient></defs>
<circle cx="16.5" cy="13.5" r="11.8" fill="url(#ffg)"/>
<path d="M4.6 4.2 Q5.2 6.8 6.6 8 Q8 5.8 11.4 5.6 Q10.2 7.4 11 9.4 Q13 10.2 15 9.8 Q14.6 11.8 12 12.8 Q10.2 13.6 10.6 15.6 Q12.6 19 17.2 18.2 Q19.2 18.4 19.4 19.6 Q17.2 22 13.6 21.4 Q17.6 24.6 22.4 22 Q27.4 18.4 25.8 11.4 Q28.6 14.2 28.4 18.4 Q30.4 14 28.2 8.4 Q31.6 12.6 31.2 18.2 Q29.8 29.8 17 31.2 Q4.6 30.6 1.2 19.4 Q0 11 4.6 4.2 Z" fill="url(#fff)"/>
<path d="M1.2 19.4 Q4.6 30.6 17 31.2 Q29.8 29.8 31.2 18.2 Q27 27 17 27 Q6 27 1.2 19.4 Z" fill="url(#ffb)"/>
</svg>
<!-- chrome button -->
<div class="abs" style="left:122px;top:0;width:53px;height:38px;border:1px solid #e8eaec;border-radius:3px;background:linear-gradient(160deg,#c2c4c6 0%,#a4a6a9 30%,#7c7e81 50%,#707275 70%,#8b8d90 100%)"></div>
<div class="abs" style="left:176px;top:1px;width:4px;height:36px;border:1px solid #b5b7b9;border-left:none;border-radius:0 2px 2px 0;background:#3f4245"></div>
<svg class="abs" style="left:132px;top:3px" width="32" height="32" viewBox="0 0 32 32">
<circle cx="16" cy="16" r="14.5" fill="#fff"/>
<path d="M16 16 L3.45 8.75 A14.5 14.5 0 0 1 28.55 8.75 Z" fill="#dd4b3e"/>
<path d="M16 16 L28.55 8.75 A14.5 14.5 0 0 1 16 30.5 Z" fill="#fcd209"/>
<path d="M16 16 L16 30.5 A14.5 14.5 0 0 1 3.45 8.75 Z" fill="#18a05e"/>
<path d="M16 9.4 L28.2 9.4 A14.5 14.5 0 0 0 16 1.5 Z" fill="#dd4b3e"/>
<path d="M21.7 19.3 L15.6 29.9 A14.5 14.5 0 0 0 28.2 9.4 L21.7 12.7Z" fill="#fcd209"/>
<path d="M10.3 19.3 L4.2 8.8 A14.5 14.5 0 0 0 16 30.5 L19 22 Z" fill="#18a05e"/>
<circle cx="16" cy="16" r="6.7" fill="#fff"/><circle cx="16" cy="16" r="5.2" fill="#4a8af4"/>
</svg>
<!-- IE -->
<svg class="abs" style="left:195px;top:1px" width="36" height="36" viewBox="0 0 36 36">
<defs><linearGradient id="ieg" x1="0" x2="0" y1="0" y2="1"><stop offset="0" stop-color="#7fdcff"/><stop offset=".5" stop-color="#38b4f0"/><stop offset="1" stop-color="#1c8ad6"/></linearGradient>
<linearGradient id="ier" x1="0" x2="1" y1="1" y2="0"><stop offset="0" stop-color="#f0a800"/><stop offset=".5" stop-color="#ffd83a"/><stop offset="1" stop-color="#e8a200"/></linearGradient></defs>
<path fill-rule="evenodd" d="M32.77,20.5 A13.5,13.5 0 1 0 31.2,24.75 L25.3,22 A6.5,6.5 0 0 1 13.5,20.5 Z M13.3,16 A6.4,6.4 0 0 1 25.7,16 Z" fill="url(#ieg)"/>
<path d="M5.2,31 Q0.5,22.5 9.5,12 Q19,1.5 30.5,3.2 Q33.6,4.6 32.2,8.4" fill="none" stroke="url(#ier)" stroke-width="2.8" stroke-linecap="round"/>
</svg>
<!-- word button -->
<div class="abs" style="left:246px;top:0;width:58px;height:38px;border:1px solid #9ea0a3;border-radius:2px;background:linear-gradient(180deg,#52555a 0%,#303337 45%,#17191d 50%,#111317 100%)"></div>
<svg class="abs" style="left:260px;top:3px" width="31" height="32" viewBox="0 0 31 32">
<rect x="13" y="4.5" width="17" height="23" fill="#fff" stroke="#2b579a" stroke-width="1"/>
<g fill="#2b579a"><rect x="19" y="8" width="9" height="1.6"/><rect x="19" y="11.3" width="9" height="1.6"/><rect x="19" y="14.6" width="9" height="1.6"/><rect x="19" y="17.9" width="9" height="1.6"/><rect x="19" y="21.2" width="9" height="1.6"/></g>
<path d="M0 4 L18 0.8 V31.2 L0 28 Z" fill="#2b579a"/>
<path d="M3.6 11 H5.9 L7.3 18.5 L8.9 11 H11 L12.6 18.5 L14 11 H16.2 L13.8 21.4 H11.5 L9.9 14 L8.3 21.4 H6 Z" fill="#fff"/>
</svg>
<!-- excel -->
<svg class="abs" style="left:322px;top:3px" width="31" height="32" viewBox="0 0 31 32">
<rect x="13" y="4.5" width="17" height="23" fill="#fff" stroke="#1e7145" stroke-width="1"/>
<g fill="#1e7145"><rect x="19" y="7.5" width="4" height="2.4"/><rect x="24" y="7.5" width="4" height="2.4"/><rect x="19" y="11.2" width="4" height="2.4"/><rect x="24" y="11.2" width="4" height="2.4"/><rect x="19" y="14.9" width="4" height="2.4"/><rect x="24" y="14.9" width="4" height="2.4"/><rect x="19" y="18.6" width="4" height="2.4"/><rect x="24" y="18.6" width="4" height="2.4"/><rect x="19" y="22.3" width="4" height="2.4"/><rect x="24" y="22.3" width="4" height="2.4"/></g>
<path d="M0 4 L18 0.8 V31.2 L0 28 Z" fill="#1e7145"/>
<path d="M4.6 10.8 H7.4 L9.2 14.3 L11 10.8 H13.7 L10.6 16 L13.8 21.4 H11 L9.1 17.8 L7.2 21.4 H4.4 L7.7 16 Z" fill="#fff"/>
</svg>
<!-- powerpoint -->
<svg class="abs" style="left:384px;top:3px" width="31" height="32" viewBox="0 0 31 32">
<rect x="13" y="4.5" width="17" height="23" fill="#fff" stroke="#d24726" stroke-width="1"/>
<path d="M23.2 8 A5 5 0 1 0 28.2 13 H23.2 Z" fill="#d24726"/><path d="M24.4 6.8 A5 5 0 0 1 29.4 11.8 H24.4 Z" fill="#d24726"/>
<rect x="19" y="20" width="9" height="1.6" fill="#d24726"/><rect x="19" y="23" width="9" height="1.6" fill="#d24726"/>
<path d="M0 4 L18 0.8 V31.2 L0 28 Z" fill="#d24726"/>
<path d="M5.6 10.8 H10.2 Q13.6 10.8 13.6 14.2 Q13.6 17.7 10.1 17.7 H8 V21.4 H5.6 Z M8 12.8 V15.7 H9.7 Q11.2 15.7 11.2 14.2 Q11.2 12.8 9.7 12.8 Z" fill="#fff"/>
</svg>
<!-- math input -->
<svg class="abs" style="left:444px;top:1px" width="34" height="34" viewBox="0 0 34 34">
<defs><radialGradient id="mig" cx=".4" cy=".3" r=".8"><stop offset="0" stop-color="#8fc3f0"/><stop offset=".6" stop-color="#3a7fc9"/><stop offset="1" stop-color="#245a9e"/></radialGradient></defs>
<circle cx="17" cy="17" r="16" fill="url(#mig)"/>
<path d="M7 7.5 H18 V10.5 H17 Q16.8 9 15.5 9 H10 L14.6 15.6 L9.6 23 H16 Q17.2 23 17.6 21.2 H18.6 L18 25 H7 V24 L12.2 16.4 L7 8.6 Z" fill="#fff"/>
<text x="20" y="18" font-family="Liberation Sans,sans-serif" font-size="11" fill="#fff">α</text>
<rect x="19.5" y="24" width="8" height="1.4" fill="#fff"/><rect x="22.8" y="20.6" width="1.4" height="8" fill="#fff"/>
</svg>
<!-- tray -->
<div class="abs" style="left:1071px;top:10px;font-size:12px;line-height:14px;color:#fff">EN</div>
<div class="abs" style="left:1102px;top:18px;width:0;height:0;border-left:4px solid transparent;border-right:4px solid transparent;border-bottom:4px solid #e8e8e8"></div>
<svg class="abs" style="left:1123px;top:11px" width="17" height="16" viewBox="0 0 17 16"><rect x="1" y="1" width="1.4" height="14.5" fill="#fff"/><path d="M3.2 2 Q6 0.8 8.5 2.4 Q11.5 4.2 15.5 3.2 Q14.5 5.5 13.4 9.2 Q10.5 10 8.2 8.6 Q5.8 7.2 3.2 8.4 Z" fill="#fff"/></svg>
<svg class="abs" style="left:1146px;top:12px" width="18" height="16" viewBox="0 0 18 16"><path d="M3 0.5 V4 M5.5 0.5 V4 M1.8 3.2 H6.8 V7 H1.8 Z M4.3 7 V12" fill="none" stroke="#fff" stroke-width="1.3"/><rect x="5.8" y="3.6" width="10.6" height="8" fill="#10151b" stroke="#fff" stroke-width="1.4"/><rect x="8" y="13.8" width="6.5" height="1.4" fill="#fff"/><rect x="10.5" y="12" width="1.5" height="2" fill="#fff"/></svg>
<svg class="abs" style="left:1170px;top:11px" width="18" height="18" viewBox="0 0 18 18"><path d="M1.5 5.5 H4 L8.2 1 V14.5 L4 10.5 H1.5 Z" fill="#fff"/><circle cx="12.4" cy="12" r="5.2" fill="#e8131b"/><circle cx="12.4" cy="12" r="2.9" fill="none" stroke="#fff" stroke-width="1.6"/><path d="M10.3 9.9 L14.5 14.1" stroke="#fff" stroke-width="1.6"/></svg>
<div class="abs" style="left:1195px;top:4px;width:70px;text-align:center;font-size:11.4px;line-height:16px;color:#fff;white-space:nowrap">12:40 PM<br>12/8/2015</div>
<div class="abs" style="left:1266px;top:1px;width:14px;height:38px;border:1px solid #6d7175;border-right:none;background:linear-gradient(135deg,#474b4f 0%,#25282c 45%,#121518 55%,#0d0f12 100%)"></div>

  </div>
</div>
</body>
</html>
